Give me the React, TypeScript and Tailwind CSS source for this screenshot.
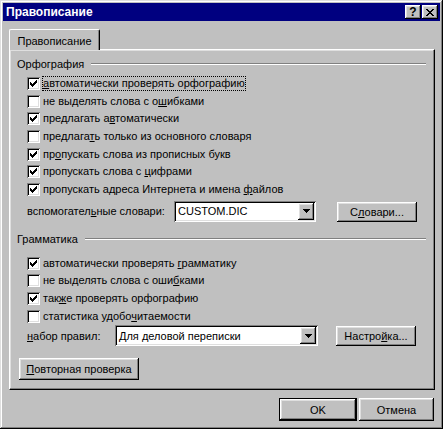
import React from 'react';

// ── 3D edges (classic Windows look) ─────────────────────────────────────────

const raised =
  'shadow-[inset_-1px_-1px_0_#000,inset_1px_1px_0_#fff,inset_-2px_-2px_0_#808080,inset_2px_2px_0_#dfdfdf]';
const sunken =
  'shadow-[inset_1px_1px_0_#808080,inset_-1px_-1px_0_#fff,inset_2px_2px_0_#000,inset_-2px_-2px_0_#dfdfdf]';

// "&" marks the access-key letter
function Hot({ text }: { text: string }) {
  const i = text.indexOf('&');
  if (i < 0) return <span className="whitespace-nowrap">{text}</span>;
  return (
    <span className="whitespace-nowrap">
      {text.slice(0, i)}
      <u className="underline-offset-[1px]">{text[i + 1]}</u>
      {text.slice(i + 2)}
    </span>
  );
}

function CheckBox({ checked }: { checked: boolean }) {
  return (
    <div className={`flex h-[13px] w-[13px] shrink-0 items-center justify-center bg-white ${sunken}`}>
      {checked && (
        <svg width="7" height="7" viewBox="0 0 7 7" shapeRendering="crispEdges">
          <path
            fill="#000"
            d="M6 0h1v3H6z M5 1h1v3H5z M4 2h1v3H4z M3 3h1v3H3z M2 4h1v3H2z M1 3h1v3H1z M0 2h1v3H0z"
          />
        </svg>
      )}
    </div>
  );
}

function CheckRow({ label, checked, focused }: { label: string; checked: boolean; focused?: boolean }) {
  return (
    <div className="flex h-[17.67px] items-start pl-[17px] pt-[2px]">
      <CheckBox checked={checked} />
      <span
        className={[
          'ml-[2px] -mt-px whitespace-nowrap border leading-[13px]',
          focused ? 'border-dotted border-black' : 'border-transparent',
        ].join(' ')}
      >
        <Hot text={label} />
      </span>
    </div>
  );
}

function Group({ title }: { title: string }) {
  return (
    <div className="flex h-[14px] items-center pl-[7px] pr-[8px]">
      <span className="leading-[14px]">{title}</span>
      <div className="ml-[7px] h-[2px] flex-1 border-t border-b border-t-[#808080] border-b-white" />
    </div>
  );
}

function Arrow() {
  return (
    <svg width="7" height="4" viewBox="0 0 7 4" shapeRendering="crispEdges">
      <path fill="#000" d="M0 0h7v1H0z M1 1h5v1H1z M2 2h3v1H2z M3 3h1v1H3z" />
    </svg>
  );
}

function Combo({ value, className }: { value: string; className: string }) {
  return (
    <div className={`flex h-[21px] bg-white p-[2px] ${sunken} ${className}`}>
      <div className="flex flex-1 items-center overflow-hidden whitespace-nowrap pl-[2px] leading-[14px]">{value}</div>
      <div className={`flex h-[17px] w-[16px] items-center justify-center bg-[#c0c0c0] ${raised}`}>
        <Arrow />
      </div>
    </div>
  );
}

function Btn({ children, className }: { children: React.ReactNode; className: string }) {
  return (
    <div className={`flex items-center justify-center whitespace-nowrap bg-[#c0c0c0] leading-[14px] ${raised} ${className}`}>
      {children}
    </div>
  );
}

// ── Title bar ───────────────────────────────────────────────────────────────

function TitleBar() {
  return (
    <div className="flex h-[18px] items-center justify-between bg-[#000080] pl-[3px] pr-[2px]">
      <span className="text-[12px] font-bold leading-[14px] text-white">Правописание</span>
      <div className="flex gap-[1px]">
        <div className={`flex h-[14px] w-[16px] items-center justify-center bg-[#c0c0c0] ${raised}`}>
          <span className="text-[12px] font-bold leading-[12px] text-black">?</span>
        </div>
        <div className={`flex h-[14px] w-[16px] items-center justify-center bg-[#c0c0c0] ${raised}`}>
          <svg width="8" height="7" viewBox="0 0 8 7" shapeRendering="crispEdges">
            <path
              fill="#000"
              d="M0 0h2v1H0z M6 0h2v1H6z M1 1h2v1H1z M5 1h2v1H5z M2 2h4v1H2z M3 3h2v1H3z M2 4h4v1H2z M1 5h2v1H1z M5 5h2v1H5z M0 6h2v1H0z M6 6h2v1H6z"
            />
          </svg>
        </div>
      </div>
    </div>
  );
}

// ── Dialog ──────────────────────────────────────────────────────────────────

export default function App() {
  return (
    <div
      className={`flex h-[429px] w-[443px] flex-col bg-[#c0c0c0] p-[3px] font-['Liberation_Sans',Arial,sans-serif] text-[11px] text-black shadow-[inset_-1px_-1px_0_#000,inset_1px_1px_0_#dfdfdf,inset_-2px_-2px_0_#808080,inset_2px_2px_0_#fff]`}
    >
      <TitleBar />

      <div className="flex flex-col px-[6px] pt-[8px]">
        {/* Tab */}
        <div className="flex">
          <div className="relative z-10 -mb-px h-[21px] w-[91px] rounded-t-[2px] border-l border-t border-r border-white border-r-black bg-[#c0c0c0] pt-[4px] text-center leading-[14px] shadow-[inset_-1px_0_0_#808080]">
            Правописание
          </div>
        </div>

        {/* Panel */}
        <div className="h-[341px] w-[426px] border border-white border-r-black border-b-black shadow-[inset_-1px_-1px_0_#808080,inset_1px_1px_0_#dfdfdf]">
          <div className="mt-[7px]">
            <Group title="Орфография" />
          </div>
          <div className="mt-[4px]">
            <CheckRow label="&автоматически проверять орфографию" checked focused />
            <CheckRow label="не выделять слова с о&шибками" checked={false} />
            <CheckRow label="предлагать а&втоматически" checked />
            <CheckRow label="предлага&ть только из основного словаря" checked={false} />
            <CheckRow label="пр&опускать слова из прописных букв" checked />
            <CheckRow label="пропускать слова с &цифрами" checked />
            <CheckRow label="пропускать адреса Интернета и имена &файлов" checked />
          </div>

          <div className="mt-[2px] flex h-[21px] pl-[17px]">
            <div className="flex w-[147px] items-center leading-[14px]">
              <Hot text="вспомогател&ьные словари:" />
            </div>
            <Combo value="CUSTOM.DIC" className="w-[142px]" />
            <Btn className="ml-[21px] mt-[1px] h-[20px] w-[80px]">
              <Hot text="С&ловари..." />
            </Btn>
          </div>

          <div className="mt-[10px]">
            <Group title="Грамматика" />
          </div>
          <div className="mt-[9px]">
            <CheckRow label="автоматически проверять &грамматику" checked />
            <CheckRow label="не выделять слова с оши&бками" checked={false} />
            <CheckRow label="так&же проверять орфографию" checked />
            <CheckRow label="статистика удобо&читаемости" checked={false} />
          </div>

          <div className="flex h-[21px] pl-[17px]">
            <div className="flex w-[88px] items-center leading-[14px]">
              <Hot text="&набор правил:" />
            </div>
            <Combo value="Для деловой переписки" className="w-[203px]" />
            <Btn className="ml-[18px] mt-[1px] h-[20px] w-[80px]">
              <Hot text="Настро&йка..." />
            </Btn>
          </div>

          <div className="mt-[12px] flex pl-[9px]">
            <Btn className="h-[22px] w-[120px]">
              <Hot text="&Повторная проверка" />
            </Btn>
          </div>
        </div>
      </div>

      {/* Footer buttons */}
      <div className="mt-[8px] flex justify-end gap-[2px] pr-[6px]">
        <div className="h-[23px] w-[78px] border border-black">
          <Btn className="h-full w-full">OK</Btn>
        </div>
        <Btn className="h-[23px] w-[75px]">Отмена</Btn>
      </div>
    </div>
  );
}
